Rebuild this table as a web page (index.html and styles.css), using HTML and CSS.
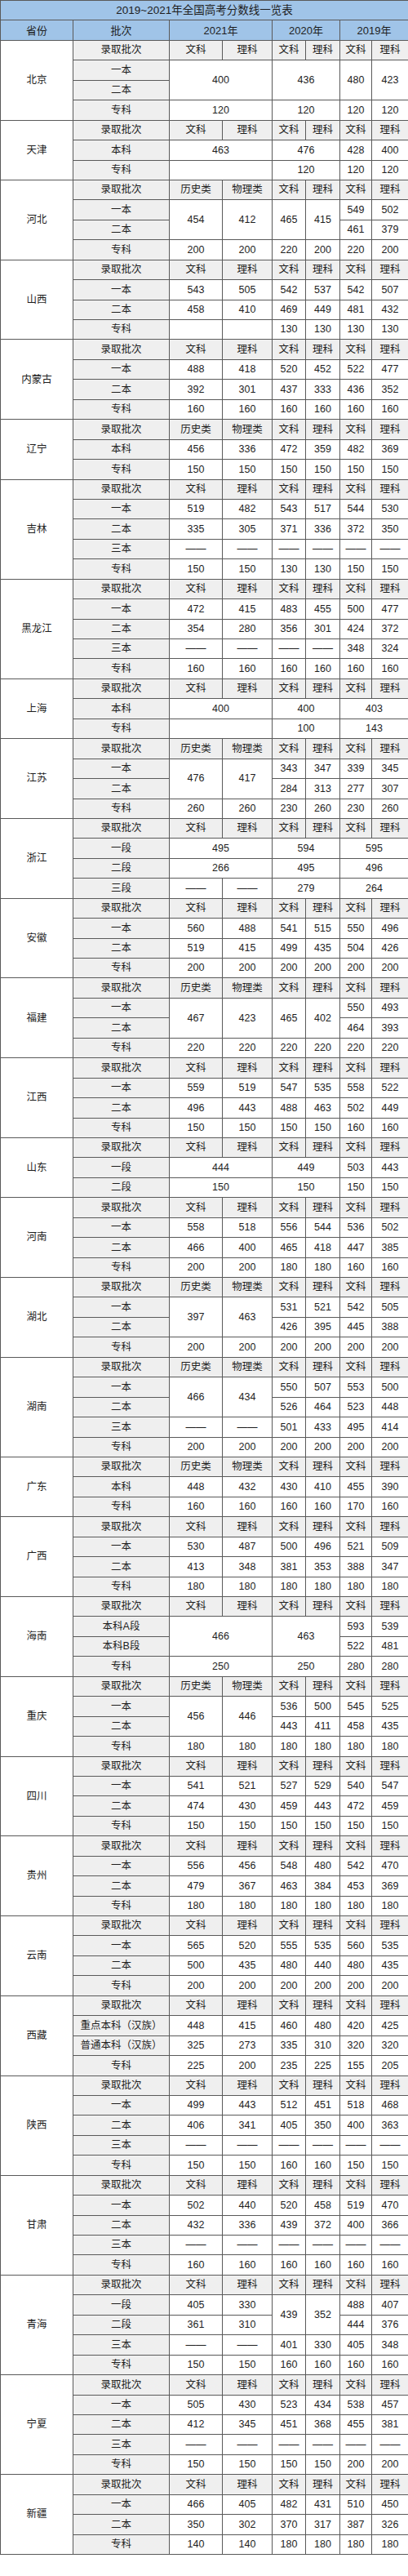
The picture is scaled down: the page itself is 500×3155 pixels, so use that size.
FILE: index.html
```html
<!DOCTYPE html>
<html lang="zh-CN">
<head>
<meta charset="utf-8">
<title>2019~2021年全国高考分数线一览表</title>
<link rel="stylesheet" href="styles.css">
</head>
<body>
<table class="tbl">
<colgroup>
<col class="c-prov"><col class="c-batch"><col class="c-y21a"><col class="c-y21b"><col class="c-y20a"><col class="c-y20b"><col class="c-y19a"><col class="c-y19b">
</colgroup>
<tr><th class="blue title" colspan="8">2019~2021年全国高考分数线一览表</th></tr>
<tr><th class="blue">省份</th><th class="blue">批次</th><th class="blue" colspan="2">2021年</th><th class="blue" colspan="2">2020年</th><th class="blue" colspan="2">2019年</th></tr>

<tr class="first"><td class="prov" rowspan="4">北京</td><th>录取批次</th><th>文科</th><th>理科</th><th>文科</th><th>理科</th><th>文科</th><th>理科</th></tr>
<tr><th>一本</th><td colspan="2" rowspan="2">400</td><td colspan="2" rowspan="2">436</td><td rowspan="2">480</td><td rowspan="2">423</td></tr>
<tr><th>二本</th></tr>
<tr><th>专科</th><td colspan="2">120</td><td colspan="2">120</td><td>120</td><td>120</td></tr>

<tr class="first"><td class="prov" rowspan="3">天津</td><th>录取批次</th><th>文科</th><th>理科</th><th>文科</th><th>理科</th><th>文科</th><th>理科</th></tr>
<tr><th>本科</th><td colspan="2">463</td><td colspan="2">476</td><td>428</td><td>400</td></tr>
<tr><th>专科</th><td colspan="2"></td><td colspan="2">120</td><td>120</td><td>120</td></tr>

<tr class="first"><td class="prov" rowspan="4">河北</td><th>录取批次</th><th>历史类</th><th>物理类</th><th>文科</th><th>理科</th><th>文科</th><th>理科</th></tr>
<tr><th>一本</th><td rowspan="2">454</td><td rowspan="2">412</td><td rowspan="2">465</td><td rowspan="2">415</td><td>549</td><td>502</td></tr>
<tr><th>二本</th><td>461</td><td>379</td></tr>
<tr><th>专科</th><td>200</td><td>200</td><td>220</td><td>200</td><td>220</td><td>200</td></tr>

<tr class="first"><td class="prov" rowspan="4">山西</td><th>录取批次</th><th>文科</th><th>理科</th><th>文科</th><th>理科</th><th>文科</th><th>理科</th></tr>
<tr><th>一本</th><td>543</td><td>505</td><td>542</td><td>537</td><td>542</td><td>507</td></tr>
<tr><th>二本</th><td>458</td><td>410</td><td>469</td><td>449</td><td>481</td><td>432</td></tr>
<tr><th>专科</th><td></td><td></td><td>130</td><td>130</td><td>130</td><td>130</td></tr>

<tr class="first"><td class="prov" rowspan="4">内蒙古</td><th>录取批次</th><th>文科</th><th>理科</th><th>文科</th><th>理科</th><th>文科</th><th>理科</th></tr>
<tr><th>一本</th><td>488</td><td>418</td><td>520</td><td>452</td><td>522</td><td>477</td></tr>
<tr><th>二本</th><td>392</td><td>301</td><td>437</td><td>333</td><td>436</td><td>352</td></tr>
<tr><th>专科</th><td>160</td><td>160</td><td>160</td><td>160</td><td>160</td><td>160</td></tr>

<tr class="first"><td class="prov" rowspan="3">辽宁</td><th>录取批次</th><th>历史类</th><th>物理类</th><th>文科</th><th>理科</th><th>文科</th><th>理科</th></tr>
<tr><th>本科</th><td>456</td><td>336</td><td>472</td><td>359</td><td>482</td><td>369</td></tr>
<tr><th>专科</th><td>150</td><td>150</td><td>150</td><td>150</td><td>150</td><td>150</td></tr>

<tr class="first"><td class="prov" rowspan="5">吉林</td><th>录取批次</th><th>文科</th><th>理科</th><th>文科</th><th>理科</th><th>文科</th><th>理科</th></tr>
<tr><th>一本</th><td>519</td><td>482</td><td>543</td><td>517</td><td>544</td><td>530</td></tr>
<tr><th>二本</th><td>335</td><td>305</td><td>371</td><td>336</td><td>372</td><td>350</td></tr>
<tr><th>三本</th><td>——</td><td>——</td><td>——</td><td>——</td><td>——</td><td>——</td></tr>
<tr><th>专科</th><td>150</td><td>150</td><td>130</td><td>130</td><td>150</td><td>150</td></tr>

<tr class="first"><td class="prov" rowspan="5">黑龙江</td><th>录取批次</th><th>文科</th><th>理科</th><th>文科</th><th>理科</th><th>文科</th><th>理科</th></tr>
<tr><th>一本</th><td>472</td><td>415</td><td>483</td><td>455</td><td>500</td><td>477</td></tr>
<tr><th>二本</th><td>354</td><td>280</td><td>356</td><td>301</td><td>424</td><td>372</td></tr>
<tr><th>三本</th><td>——</td><td>——</td><td>——</td><td>——</td><td>348</td><td>324</td></tr>
<tr><th>专科</th><td>160</td><td>160</td><td>160</td><td>160</td><td>160</td><td>160</td></tr>

<tr class="first"><td class="prov" rowspan="3">上海</td><th>录取批次</th><th>文科</th><th>理科</th><th>文科</th><th>理科</th><th>文科</th><th>理科</th></tr>
<tr><th>本科</th><td colspan="2">400</td><td colspan="2">400</td><td colspan="2">403</td></tr>
<tr><th>专科</th><td colspan="2"></td><td colspan="2">100</td><td colspan="2">143</td></tr>

<tr class="first"><td class="prov" rowspan="4">江苏</td><th>录取批次</th><th>历史类</th><th>物理类</th><th>文科</th><th>理科</th><th>文科</th><th>理科</th></tr>
<tr><th>一本</th><td rowspan="2">476</td><td rowspan="2">417</td><td>343</td><td>347</td><td>339</td><td>345</td></tr>
<tr><th>二本</th><td>284</td><td>313</td><td>277</td><td>307</td></tr>
<tr><th>专科</th><td>260</td><td>260</td><td>230</td><td>260</td><td>230</td><td>260</td></tr>

<tr class="first"><td class="prov" rowspan="4">浙江</td><th>录取批次</th><th>文科</th><th>理科</th><th>文科</th><th>理科</th><th>文科</th><th>理科</th></tr>
<tr><th>一段</th><td colspan="2">495</td><td colspan="2">594</td><td colspan="2">595</td></tr>
<tr><th>二段</th><td colspan="2">266</td><td colspan="2">495</td><td colspan="2">496</td></tr>
<tr><th>三段</th><td>——</td><td>——</td><td colspan="2">279</td><td colspan="2">264</td></tr>

<tr class="first"><td class="prov" rowspan="4">安徽</td><th>录取批次</th><th>文科</th><th>理科</th><th>文科</th><th>理科</th><th>文科</th><th>理科</th></tr>
<tr><th>一本</th><td>560</td><td>488</td><td>541</td><td>515</td><td>550</td><td>496</td></tr>
<tr><th>二本</th><td>519</td><td>415</td><td>499</td><td>435</td><td>504</td><td>426</td></tr>
<tr><th>专科</th><td>200</td><td>200</td><td>200</td><td>200</td><td>200</td><td>200</td></tr>

<tr class="first"><td class="prov" rowspan="4">福建</td><th>录取批次</th><th>历史类</th><th>物理类</th><th>文科</th><th>理科</th><th>文科</th><th>理科</th></tr>
<tr><th>一本</th><td rowspan="2">467</td><td rowspan="2">423</td><td rowspan="2">465</td><td rowspan="2">402</td><td>550</td><td>493</td></tr>
<tr><th>二本</th><td>464</td><td>393</td></tr>
<tr><th>专科</th><td>220</td><td>220</td><td>220</td><td>220</td><td>220</td><td>220</td></tr>

<tr class="first"><td class="prov" rowspan="4">江西</td><th>录取批次</th><th>文科</th><th>理科</th><th>文科</th><th>理科</th><th>文科</th><th>理科</th></tr>
<tr><th>一本</th><td>559</td><td>519</td><td>547</td><td>535</td><td>558</td><td>522</td></tr>
<tr><th>二本</th><td>496</td><td>443</td><td>488</td><td>463</td><td>502</td><td>449</td></tr>
<tr><th>专科</th><td>150</td><td>150</td><td>150</td><td>150</td><td>160</td><td>160</td></tr>

<tr class="first"><td class="prov" rowspan="3">山东</td><th>录取批次</th><th>文科</th><th>理科</th><th>文科</th><th>理科</th><th>文科</th><th>理科</th></tr>
<tr><th>一段</th><td colspan="2">444</td><td colspan="2">449</td><td>503</td><td>443</td></tr>
<tr><th>二段</th><td colspan="2">150</td><td colspan="2">150</td><td>150</td><td>150</td></tr>

<tr class="first"><td class="prov" rowspan="4">河南</td><th>录取批次</th><th>文科</th><th>理科</th><th>文科</th><th>理科</th><th>文科</th><th>理科</th></tr>
<tr><th>一本</th><td>558</td><td>518</td><td>556</td><td>544</td><td>536</td><td>502</td></tr>
<tr><th>二本</th><td>466</td><td>400</td><td>465</td><td>418</td><td>447</td><td>385</td></tr>
<tr><th>专科</th><td>200</td><td>200</td><td>180</td><td>180</td><td>160</td><td>160</td></tr>

<tr class="first"><td class="prov" rowspan="4">湖北</td><th>录取批次</th><th>历史类</th><th>物理类</th><th>文科</th><th>理科</th><th>文科</th><th>理科</th></tr>
<tr><th>一本</th><td rowspan="2">397</td><td rowspan="2">463</td><td>531</td><td>521</td><td>542</td><td>505</td></tr>
<tr><th>二本</th><td>426</td><td>395</td><td>445</td><td>388</td></tr>
<tr><th>专科</th><td>200</td><td>200</td><td>200</td><td>200</td><td>200</td><td>200</td></tr>

<tr class="first"><td class="prov" rowspan="5">湖南</td><th>录取批次</th><th>历史类</th><th>物理类</th><th>文科</th><th>理科</th><th>文科</th><th>理科</th></tr>
<tr><th>一本</th><td rowspan="2">466</td><td rowspan="2">434</td><td>550</td><td>507</td><td>553</td><td>500</td></tr>
<tr><th>二本</th><td>526</td><td>464</td><td>523</td><td>448</td></tr>
<tr><th>三本</th><td>——</td><td>——</td><td>501</td><td>433</td><td>495</td><td>414</td></tr>
<tr><th>专科</th><td>200</td><td>200</td><td>200</td><td>200</td><td>200</td><td>200</td></tr>

<tr class="first"><td class="prov" rowspan="3">广东</td><th>录取批次</th><th>历史类</th><th>物理类</th><th>文科</th><th>理科</th><th>文科</th><th>理科</th></tr>
<tr><th>本科</th><td>448</td><td>432</td><td>430</td><td>410</td><td>455</td><td>390</td></tr>
<tr><th>专科</th><td>160</td><td>160</td><td>160</td><td>160</td><td>170</td><td>160</td></tr>

<tr class="first"><td class="prov" rowspan="4">广西</td><th>录取批次</th><th>文科</th><th>理科</th><th>文科</th><th>理科</th><th>文科</th><th>理科</th></tr>
<tr><th>一本</th><td>530</td><td>487</td><td>500</td><td>496</td><td>521</td><td>509</td></tr>
<tr><th>二本</th><td>413</td><td>348</td><td>381</td><td>353</td><td>388</td><td>347</td></tr>
<tr><th>专科</th><td>180</td><td>180</td><td>180</td><td>180</td><td>180</td><td>180</td></tr>

<tr class="first"><td class="prov" rowspan="4">海南</td><th>录取批次</th><th>文科</th><th>理科</th><th>文科</th><th>理科</th><th>文科</th><th>理科</th></tr>
<tr><th>本科A段</th><td colspan="2" rowspan="2">466</td><td colspan="2" rowspan="2">463</td><td>593</td><td>539</td></tr>
<tr><th>本科B段</th><td>522</td><td>481</td></tr>
<tr><th>专科</th><td colspan="2">250</td><td colspan="2">250</td><td>280</td><td>280</td></tr>

<tr class="first"><td class="prov" rowspan="4">重庆</td><th>录取批次</th><th>历史类</th><th>物理类</th><th>文科</th><th>理科</th><th>文科</th><th>理科</th></tr>
<tr><th>一本</th><td rowspan="2">456</td><td rowspan="2">446</td><td>536</td><td>500</td><td>545</td><td>525</td></tr>
<tr><th>二本</th><td>443</td><td>411</td><td>458</td><td>435</td></tr>
<tr><th>专科</th><td>180</td><td>180</td><td>180</td><td>180</td><td>180</td><td>180</td></tr>

<tr class="first"><td class="prov" rowspan="4">四川</td><th>录取批次</th><th>文科</th><th>理科</th><th>文科</th><th>理科</th><th>文科</th><th>理科</th></tr>
<tr><th>一本</th><td>541</td><td>521</td><td>527</td><td>529</td><td>540</td><td>547</td></tr>
<tr><th>二本</th><td>474</td><td>430</td><td>459</td><td>443</td><td>472</td><td>459</td></tr>
<tr><th>专科</th><td>150</td><td>150</td><td>150</td><td>150</td><td>150</td><td>150</td></tr>

<tr class="first"><td class="prov" rowspan="4">贵州</td><th>录取批次</th><th>文科</th><th>理科</th><th>文科</th><th>理科</th><th>文科</th><th>理科</th></tr>
<tr><th>一本</th><td>556</td><td>456</td><td>548</td><td>480</td><td>542</td><td>470</td></tr>
<tr><th>二本</th><td>479</td><td>367</td><td>463</td><td>384</td><td>453</td><td>369</td></tr>
<tr><th>专科</th><td>180</td><td>180</td><td>180</td><td>180</td><td>180</td><td>180</td></tr>

<tr class="first"><td class="prov" rowspan="4">云南</td><th>录取批次</th><th>文科</th><th>理科</th><th>文科</th><th>理科</th><th>文科</th><th>理科</th></tr>
<tr><th>一本</th><td>565</td><td>520</td><td>555</td><td>535</td><td>560</td><td>535</td></tr>
<tr><th>二本</th><td>500</td><td>435</td><td>480</td><td>440</td><td>480</td><td>435</td></tr>
<tr><th>专科</th><td>200</td><td>200</td><td>200</td><td>200</td><td>200</td><td>200</td></tr>

<tr class="first"><td class="prov" rowspan="4">西藏</td><th>录取批次</th><th>文科</th><th>理科</th><th>文科</th><th>理科</th><th>文科</th><th>理科</th></tr>
<tr><th>重点本科（汉族）</th><td>448</td><td>415</td><td>460</td><td>480</td><td>420</td><td>425</td></tr>
<tr><th>普通本科（汉族）</th><td>325</td><td>273</td><td>335</td><td>310</td><td>320</td><td>320</td></tr>
<tr><th>专科</th><td>225</td><td>200</td><td>235</td><td>225</td><td>155</td><td>205</td></tr>

<tr class="first"><td class="prov" rowspan="5">陕西</td><th>录取批次</th><th>文科</th><th>理科</th><th>文科</th><th>理科</th><th>文科</th><th>理科</th></tr>
<tr><th>一本</th><td>499</td><td>443</td><td>512</td><td>451</td><td>518</td><td>468</td></tr>
<tr><th>二本</th><td>406</td><td>341</td><td>405</td><td>350</td><td>400</td><td>363</td></tr>
<tr><th>三本</th><td>——</td><td>——</td><td>——</td><td>——</td><td>——</td><td>——</td></tr>
<tr><th>专科</th><td>150</td><td>150</td><td>160</td><td>160</td><td>150</td><td>150</td></tr>

<tr class="first"><td class="prov" rowspan="5">甘肃</td><th>录取批次</th><th>文科</th><th>理科</th><th>文科</th><th>理科</th><th>文科</th><th>理科</th></tr>
<tr><th>一本</th><td>502</td><td>440</td><td>520</td><td>458</td><td>519</td><td>470</td></tr>
<tr><th>二本</th><td>432</td><td>336</td><td>439</td><td>372</td><td>400</td><td>366</td></tr>
<tr><th>三本</th><td>——</td><td>——</td><td>——</td><td>——</td><td>——</td><td>——</td></tr>
<tr><th>专科</th><td>160</td><td>160</td><td>160</td><td>160</td><td>160</td><td>160</td></tr>

<tr class="first"><td class="prov" rowspan="5">青海</td><th>录取批次</th><th>文科</th><th>理科</th><th>文科</th><th>理科</th><th>文科</th><th>理科</th></tr>
<tr><th>一段</th><td>405</td><td>330</td><td rowspan="2">439</td><td rowspan="2">352</td><td>488</td><td>407</td></tr>
<tr><th>二段</th><td>361</td><td>310</td><td>444</td><td>376</td></tr>
<tr><th>三本</th><td>——</td><td>——</td><td>401</td><td>330</td><td>405</td><td>348</td></tr>
<tr><th>专科</th><td>150</td><td>150</td><td>160</td><td>160</td><td>160</td><td>160</td></tr>

<tr class="first"><td class="prov" rowspan="5">宁夏</td><th>录取批次</th><th>文科</th><th>理科</th><th>文科</th><th>理科</th><th>文科</th><th>理科</th></tr>
<tr><th>一本</th><td>505</td><td>430</td><td>523</td><td>434</td><td>538</td><td>457</td></tr>
<tr><th>二本</th><td>412</td><td>345</td><td>451</td><td>368</td><td>455</td><td>381</td></tr>
<tr><th>三本</th><td>——</td><td>——</td><td>——</td><td>——</td><td>——</td><td>——</td></tr>
<tr><th>专科</th><td>150</td><td>150</td><td>150</td><td>150</td><td>200</td><td>200</td></tr>

<tr class="first"><td class="prov" rowspan="4">新疆</td><th>录取批次</th><th>文科</th><th>理科</th><th>文科</th><th>理科</th><th>文科</th><th>理科</th></tr>
<tr><th>一本</th><td>466</td><td>405</td><td>482</td><td>431</td><td>510</td><td>450</td></tr>
<tr><th>二本</th><td>350</td><td>302</td><td>370</td><td>317</td><td>387</td><td>326</td></tr>
<tr><th>专科</th><td>140</td><td>140</td><td>180</td><td>180</td><td>180</td><td>180</td></tr>
</table>
</body>
</html>
```

FILE: styles.css
```css
html, body {
  margin: 0;
  padding: 0;
  background: #ffffff;
}

body {
  width: 500px;
  height: 3155px;
  font-family: "Liberation Sans", "Noto Sans CJK SC", Arial, sans-serif;
  color: #1e1e1e;
}

.tbl {
  width: 500px;
  table-layout: fixed;
  border-collapse: collapse;
  font-size: 12.5px;
  line-height: 1;
}

.c-prov { width: 89px; }
.c-batch { width: 118px; }
.c-y21a { width: 65px; }
.c-y21b { width: 61px; }
.c-y20a { width: 41px; }
.c-y20b { width: 42px; }
.c-y19a { width: 39px; }
.c-y19b { width: 45px; }

.tbl tr {
  height: 24.45px;
}

.tbl th,
.tbl td {
  border: 1px solid #5a5a5a;
  padding: 0;
  text-align: center;
  vertical-align: middle;
  white-space: nowrap;
  overflow: hidden;
}

.tbl th {
  background: #efefef;
  font-weight: normal;
}

.tbl td {
  background: #ffffff;
}

.tbl th.blue {
  background: #a0c4e8;
  font-size: 13px;
}

.tbl th.title {
  font-size: 13.5px;
}

.tbl td.prov {
  background: #ffffff;
}
```
